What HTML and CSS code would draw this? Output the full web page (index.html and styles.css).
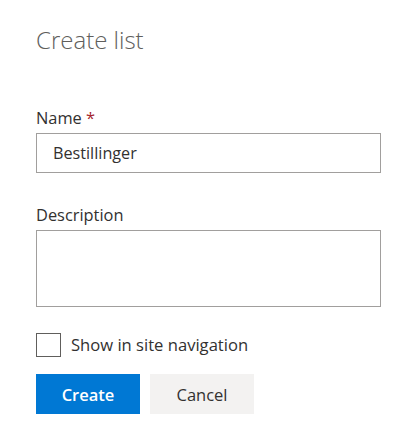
FILE: index.html
```html
<!DOCTYPE html>
<html>
<head>
<meta charset="utf-8">
<link rel="stylesheet" href="styles.css">
</head>
<body>
<div class="panel">
  <h1 class="title">Create list</h1>
  <div class="field field-name">
    <label class="label">Name <span class="req">*</span></label>
    <div class="input">Bestillinger</div>
  </div>
  <div class="field field-desc">
    <label class="label">Description</label>
    <div class="textarea"></div>
  </div>
  <div class="check-row">
    <span class="checkbox"></span>
    <span class="check-label">Show in site navigation</span>
  </div>
  <div class="actions">
    <button class="btn btn-primary">Create</button>
    <button class="btn btn-default">Cancel</button>
  </div>
</div>
</body>
</html>
```

FILE: styles.css
```css
html, body {
  margin: 0;
  padding: 0;
  background: #ffffff;
}
body {
  font-family: "Open Sans", "Noto Sans", sans-serif;
  color: #323130;
}
.panel {
  padding: 24px 35px 0 36px;
  display: flex;
  flex-direction: column;
}
.title {
  margin: 0;
  font-size: 24px;
  font-weight: 300;
  line-height: 32px;
  color: #605e5c;
}
.field-name {
  margin-top: 51px;
}
.field-desc {
  margin-top: 31px;
}
.label {
  display: block;
  font-size: 16.4px;
  line-height: 22px;
  margin-bottom: 4px;
}
.req {
  color: #a4262c;
}
.input {
  box-sizing: border-box;
  height: 40px;
  border: 1px solid #a19f9d;
  padding: 0 16px;
  font-size: 16.2px;
  line-height: 38px;
}
.textarea {
  box-sizing: border-box;
  height: 77px;
  border: 1px solid #a19f9d;
}
.check-row {
  display: flex;
  align-items: center;
  gap: 10px;
  margin-top: 26px;
}
.checkbox {
  box-sizing: border-box;
  width: 25px;
  height: 24px;
  border: 1px solid #605e5c;
}
.check-label {
  font-size: 16.6px;
  line-height: 24px;
}
.actions {
  display: flex;
  gap: 10px;
  margin-top: 17px;
}
.btn {
  width: 104px;
  height: 40px;
  border: none;
  font-family: inherit;
  font-size: 16.5px;
  font-weight: 600;
  padding: 0;
}
.btn-primary {
  background: #0078d4;
  color: #ffffff;
}
.btn-default {
  background: #f3f2f1;
  color: #323130;
  font-weight: 500;
}
```
